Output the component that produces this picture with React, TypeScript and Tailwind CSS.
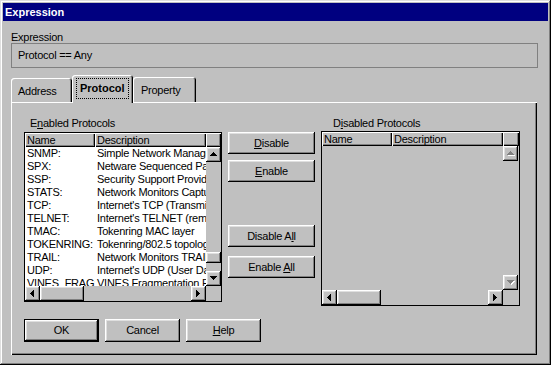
import clsx from "clsx";

const raised =
  "bg-[#c0c0c0] shadow-[inset_-1px_-1px_#000,inset_1px_1px_#fff,inset_-2px_-2px_#808080,inset_2px_2px_#dfdfdf]";
const headerCell =
  "bg-[#c0c0c0] shadow-[inset_1px_1px_#fff,inset_-1px_-1px_#000,inset_-2px_-2px_#808080]";

const arrows = {
  up: { w: 7, h: 4, d: "M3 0h1v1h1v1h1v1h1v1H0V3h1V2h1V1h1Z" },
  down: { w: 7, h: 4, d: "M0 0h7v1H6v1H5v1H4v1H3V3H2V2H1V1H0Z" },
  left: { w: 4, h: 7, d: "M3 0h1v7H3V6H2V5H1V4H0V3h1V2h1V1h1Z" },
  right: { w: 4, h: 7, d: "M0 0h1v1h1v1h1v1h1v1H3v1H2v1H1v1H0Z" },
};

type Dir = keyof typeof arrows;

function ScrollBtn({ dir, disabled }: { dir: Dir; disabled?: boolean }) {
  const a = arrows[dir];
  return (
    <div className={clsx("flex h-[15px] w-[15px] shrink-0 items-center justify-center", raised)}>
      <svg width={a.w + 1} height={a.h + 1} shapeRendering="crispEdges">
        {disabled ? (
          <>
            <path d={a.d} fill="#fff" transform="translate(1 1)" />
            <path d={a.d} fill="#808080" />
          </>
        ) : (
          <path d={a.d} fill="#000" />
        )}
      </svg>
    </div>
  );
}

const rows = [
  ["SNMP:", "Simple Network Management Protocol"],
  ["SPX:", "Netware Sequenced Packet Exchange"],
  ["SSP:", "Security Support Provider"],
  ["STATS:", "Network Monitors Capture Statistics"],
  ["TCP:", "Internet's TCP (Transmission Control Protocol)"],
  ["TELNET:", "Internet's TELNET (remote terminal)"],
  ["TMAC:", "Tokenring MAC layer"],
  ["TOKENRING:", "Tokenring/802.5 topology"],
  ["TRAIL:", "Network Monitors TRAIL protocol"],
  ["UDP:", "Internet's UDP (User Datagram Protocol)"],
  ["VINES_FRAG:", "VINES Fragmentation Protocol"],
];

function ListView({
  height,
  width,
  items,
  thumbTop,
  empty,
}: {
  height: string;
  width: string;
  items: string[][];
  thumbTop?: string;
  empty?: boolean;
}) {
  return (
    <div className={clsx("flex border border-black", height, width, empty ? "bg-[#c0c0c0]" : "bg-white")}>
      <div className="flex w-[181px] flex-col">
        <div className="flex h-[14px] shrink-0 leading-[14px]">
          <div className={clsx("w-[70px] pl-[2px]", headerCell)}>Name</div>
          <div className={clsx("w-[111px] pl-[2px]", headerCell)}>Description</div>
        </div>
        <div className="flex-1 overflow-hidden">
          {items.map(([name, desc]) => (
            <div key={name} className="flex h-[13px] leading-[13px]">
              <div className="w-[70px] overflow-hidden whitespace-nowrap pl-[2px]">{name}</div>
              <div className="w-[111px] overflow-hidden whitespace-nowrap pl-[2px]">{desc}</div>
            </div>
          ))}
        </div>
        <div className="flex h-[15px] shrink-0 bg-[#c0c0c0]">
          <ScrollBtn dir="left" />
          <div className={clsx("h-[15px] w-[44px]", raised)} />
          <div className="flex-1" />
          <ScrollBtn dir="right" />
        </div>
      </div>
      <div className="flex flex-1 flex-col bg-[#c0c0c0]">
        <div className={clsx("h-[14px] shrink-0", headerCell)} />
        <ScrollBtn dir="up" disabled={empty} />
        <div className="flex-1">
          {thumbTop && <div className={clsx("h-[11px] w-[15px]", thumbTop, raised)} />}
        </div>
        <ScrollBtn dir="down" disabled={empty} />
        <div className="h-[15px] shrink-0" />
      </div>
    </div>
  );
}

function Button({ children, isDefault, className }: { children: React.ReactNode; isDefault?: boolean; className?: string }) {
  return (
    <div
      className={clsx(
        "flex items-center justify-center",
        isDefault ? "border border-black" : "",
        className,
        raised
      )}
    >
      <span>{children}</span>
    </div>
  );
}

const tabShape =
  "flex items-center rounded-t-[3px] bg-[#c0c0c0] shadow-[inset_1px_1px_#fff,inset_-1px_0_#000,inset_-2px_0_#808080]";

export default function App() {
  return (
    <div className="h-[365px] w-[551px] bg-[#c0c0c0] p-[3px] font-['Liberation_Sans',Arial,sans-serif] text-[11px] tracking-[-0.25px] text-black shadow-[inset_-1px_-1px_#000,inset_1px_1px_#dfdfdf,inset_-2px_-2px_#808080,inset_2px_2px_#fff]">
      <div className="flex h-[18px] items-center bg-[#000080] pl-[2px] font-bold tracking-normal text-white">
        Expression
      </div>
      <div className="pl-[8px]">
        <div className="mt-[10px] h-[12px] leading-[12px]">Expression</div>
        <div className="flex h-[25px] w-[527px] items-center border border-[#808080] pl-[6px]">
          Protocol == Any
        </div>

        <div className="mt-[7px] flex h-[27px] items-end">
          <div className={clsx("h-[24px] w-[61px] pl-[7px] pt-[2px]", tabShape)}>Address</div>
          <div className={clsx("relative z-10 -mb-[1px] h-[28px] w-[61px] pl-[4px] pb-[1px]", tabShape)}>
            <span className="border border-dotted border-black px-[3px] py-[1px] font-bold tracking-normal">
              Protocol
            </span>
          </div>
          <div className={clsx("h-[25px] w-[63px] pl-[8px] pt-[2px]", tabShape)}>Property</div>
        </div>

        <div className="h-[253px] w-[526px] pl-[13px] pt-[14px] shadow-[inset_1px_1px_#fff,inset_-1px_-1px_#000,inset_-2px_-2px_#808080]">
          <div className="flex items-start">
            <div className="flex flex-col">
              <div className="h-[14px] pl-[6px] leading-[14px]">
                E<span className="underline">n</span>abled Protocols
              </div>
              <div className="mt-[2px]">
                <ListView height="h-[170px]" width="w-[198px]" items={rows} thumbTop="mt-[90px]" />
              </div>
            </div>

            <div className="ml-[6px] mt-[16px] flex w-[87px] flex-col">
              <Button className="h-[22px]">
                <span className="underline">D</span>isable
              </Button>
              <Button className="mt-[6px] h-[22px]">
                <span className="underline">E</span>nable
              </Button>
              <Button className="mt-[43px] h-[22px]">
                Disable A<span className="underline">l</span>l
              </Button>
              <Button className="mt-[9px] h-[22px]">
                Enable <span className="underline">A</span>ll
              </Button>
            </div>

            <div className="ml-[6px] flex flex-col">
              <div className="h-[14px] pl-[12px] leading-[14px]">
                D<span className="underline">i</span>sabled Protocols
              </div>
              <div className="mt-[1px]">
                <ListView height="h-[175px]" width="w-[199px]" items={[]} empty />
              </div>
            </div>
          </div>

          <div className="mt-[13px] flex gap-[6px]">
            <Button isDefault className="h-[23px] w-[75px]">
              OK
            </Button>
            <Button className="h-[23px] w-[75px]">Cancel</Button>
            <Button className="h-[23px] w-[75px]">
              <span className="underline">H</span>elp
            </Button>
          </div>
        </div>
      </div>
    </div>
  );
}
